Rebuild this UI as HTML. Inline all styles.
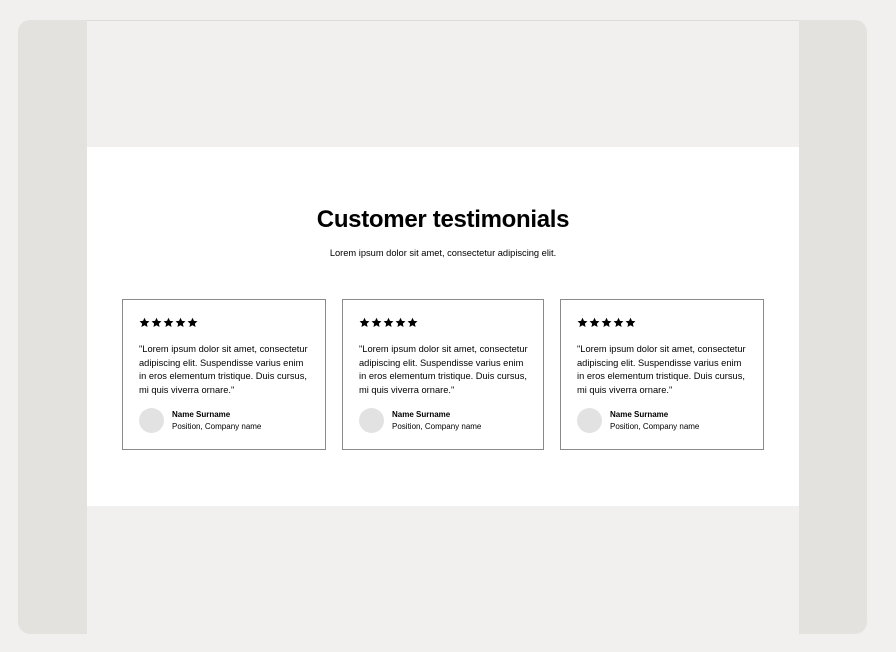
<!DOCTYPE html>
<html><head><style>
*{margin:0;padding:0;box-sizing:border-box}
body{width:896px;height:652px;background:#f1f0ee;position:relative;font-family:"Liberation Sans",sans-serif;color:#000;overflow:hidden}
.frame{position:absolute;left:18px;top:20px;width:849px;height:614px;background:#e3e2de;border-radius:12px;overflow:hidden}
.inner{position:absolute;left:69px;top:0;width:712px;height:614px;background:#f1f0ee;border-top:1px solid #dcdbd8}
.sec{position:absolute;left:0;top:126px;width:712px;height:359px;background:#fff}
h1{position:absolute;top:59px;left:0;width:712px;text-align:center;font-size:24px;font-weight:bold;letter-spacing:-0.3px}
.sub{position:absolute;top:101px;left:0;width:712px;text-align:center;font-size:9.3px}
.card{position:absolute;top:152px;height:151px;border:1px solid #8a8a8a;background:#fff;padding:14px 16px 13px}
.stars{display:flex;gap:1px;height:16px;align-items:center}
.stars svg{width:11px;height:11px}
.q{margin-top:13px;font-size:9.3px;line-height:13.6px;width:172px}
.p{margin-top:11px;display:flex;align-items:center}
.av{width:25px;height:25px;border-radius:50%;background:#e2e2e2;margin-right:8px}
.n{font-size:8px;font-weight:bold;line-height:12px}
.r{font-size:8px;line-height:12px}
</style></head><body>
<svg width="0" height="0" style="position:absolute"><defs><symbol id="s" viewBox="0 0 24 24"><path d="M12 1.5l3.2 7 7.6.8-5.7 5.1 1.6 7.5L12 18l-6.7 3.9 1.6-7.5L1.2 9.3l7.6-.8z"/></symbol></defs></svg>
<div class="frame"><div class="inner"><div class="sec">
<h1>Customer testimonials</h1>
<div class="sub">Lorem ipsum dolor sit amet, consectetur adipiscing elit.</div>
<div class="card" style="left:35px;width:204px"><div class="stars"><svg><use href="#s"/></svg><svg><use href="#s"/></svg><svg><use href="#s"/></svg><svg><use href="#s"/></svg><svg><use href="#s"/></svg></div><div class="q">"Lorem ipsum dolor sit amet, consectetur adipiscing elit. Suspendisse varius enim in eros elementum tristique. Duis cursus, mi quis viverra ornare."</div><div class="p"><div class="av"></div><div><div class="n">Name Surname</div><div class="r">Position, Company name</div></div></div></div>
<div class="card" style="left:255px;width:202px"><div class="stars"><svg><use href="#s"/></svg><svg><use href="#s"/></svg><svg><use href="#s"/></svg><svg><use href="#s"/></svg><svg><use href="#s"/></svg></div><div class="q">"Lorem ipsum dolor sit amet, consectetur adipiscing elit. Suspendisse varius enim in eros elementum tristique. Duis cursus, mi quis viverra ornare."</div><div class="p"><div class="av"></div><div><div class="n">Name Surname</div><div class="r">Position, Company name</div></div></div></div>
<div class="card" style="left:473px;width:204px"><div class="stars"><svg><use href="#s"/></svg><svg><use href="#s"/></svg><svg><use href="#s"/></svg><svg><use href="#s"/></svg><svg><use href="#s"/></svg></div><div class="q">"Lorem ipsum dolor sit amet, consectetur adipiscing elit. Suspendisse varius enim in eros elementum tristique. Duis cursus, mi quis viverra ornare."</div><div class="p"><div class="av"></div><div><div class="n">Name Surname</div><div class="r">Position, Company name</div></div></div></div>
</div></div></div>
</body></html>
